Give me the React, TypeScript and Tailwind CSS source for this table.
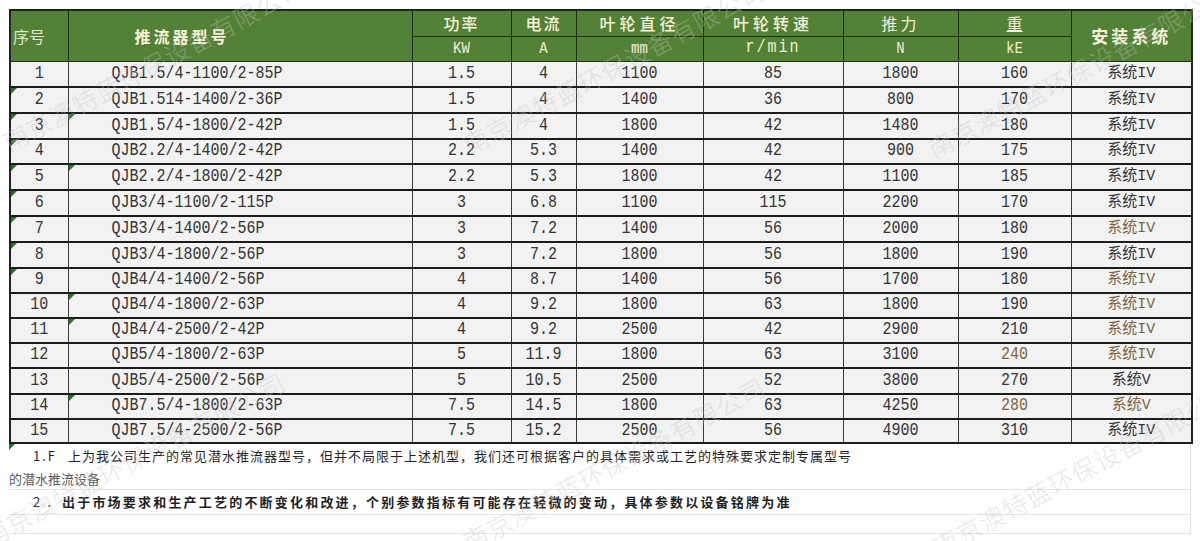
import React from 'react';

type Row = {
  no: number;
  model: string;
  kw: string;
  amp: string;
  dia: string;
  rpm: string;
  thrust: string;
  weight: string;
  sys: string;
  noMark?: boolean;
  modelMark?: boolean;
  sysBrown?: boolean;
  weightBrown?: boolean;
  h: string;
};

const rows: Row[] = [
  { no: 1, model: 'QJB1.5/4-1100/2-85P', kw: '1.5', amp: '4', dia: '1100', rpm: '85', thrust: '1800', weight: '160', sys: '系统IV', h: 'h-[26px]' },
  { no: 2, model: 'QJB1.514-1400/2-36P', kw: '1.5', amp: '4', dia: '1400', rpm: '36', thrust: '800', weight: '170', sys: '系统IV', noMark: true, h: 'h-[26px]' },
  { no: 3, model: 'QJB1.5/4-1800/2-42P', kw: '1.5', amp: '4', dia: '1800', rpm: '42', thrust: '1480', weight: '180', sys: '系统IV', noMark: true, modelMark: true, h: 'h-[26px]' },
  { no: 4, model: 'QJB2.2/4-1400/2-42P', kw: '2.2', amp: '5.3', dia: '1400', rpm: '42', thrust: '900', weight: '175', sys: '系统IV', noMark: true, h: 'h-[25px]' },
  { no: 5, model: 'QJB2.2/4-1800/2-42P', kw: '2.2', amp: '5.3', dia: '1800', rpm: '42', thrust: '1100', weight: '185', sys: '系统IV', noMark: true, modelMark: true, h: 'h-[26px]' },
  { no: 6, model: 'QJB3/4-1100/2-115P', kw: '3', amp: '6.8', dia: '1100', rpm: '115', thrust: '2200', weight: '170', sys: '系统IV', noMark: true, h: 'h-[26px]' },
  { no: 7, model: 'QJB3/4-1400/2-56P', kw: '3', amp: '7.2', dia: '1400', rpm: '56', thrust: '2000', weight: '180', sys: '系统IV', noMark: true, sysBrown: true, h: 'h-[26px]' },
  { no: 8, model: 'QJB3/4-1800/2-56P', kw: '3', amp: '7.2', dia: '1800', rpm: '56', thrust: '1800', weight: '190', sys: '系统IV', noMark: true, h: 'h-[26px]' },
  { no: 9, model: 'QJB4/4-1400/2-56P', kw: '4', amp: '8.7', dia: '1400', rpm: '56', thrust: '1700', weight: '180', sys: '系统IV', noMark: true, sysBrown: true, h: 'h-[25px]' },
  { no: 10, model: 'QJB4/4-1800/2-63P', kw: '4', amp: '9.2', dia: '1800', rpm: '63', thrust: '1800', weight: '190', sys: '系统IV', modelMark: true, sysBrown: true, h: 'h-[25px]' },
  { no: 11, model: 'QJB4/4-2500/2-42P', kw: '4', amp: '9.2', dia: '2500', rpm: '42', thrust: '2900', weight: '210', sys: '系统IV', modelMark: true, sysBrown: true, h: 'h-[25px]' },
  { no: 12, model: 'QJB5/4-1800/2-63P', kw: '5', amp: '11.9', dia: '1800', rpm: '63', thrust: '3100', weight: '240', sys: '系统IV', sysBrown: true, weightBrown: true, h: 'h-[25px]' },
  { no: 13, model: 'QJB5/4-2500/2-56P', kw: '5', amp: '10.5', dia: '2500', rpm: '52', thrust: '3800', weight: '270', sys: '系统V', h: 'h-[26px]' },
  { no: 14, model: 'QJB7.5/4-1800/2-63P', kw: '7.5', amp: '14.5', dia: '1800', rpm: '63', thrust: '4250', weight: '280', sys: '系统V', modelMark: true, sysBrown: true, weightBrown: true, h: 'h-[24px]' },
  { no: 15, model: 'QJB7.5/4-2500/2-56P', kw: '7.5', amp: '15.2', dia: '2500', rpm: '56', thrust: '4900', weight: '310', sys: '系统IV', h: 'h-[24px]' },
];

const WATERMARK = '南京澳特蓝环保设备有限公司';

// top-left green flag Excel puts on "number stored as text" cells
function Flag() {
  return <span className="absolute left-0 top-0 h-0 w-0 border-r-[6px] border-t-[6px] border-r-transparent border-t-[#1f7a1f]" />;
}

function Watermark({ pos }: { pos: string }) {
  return (
    <span
      className={`pointer-events-none absolute whitespace-nowrap text-[25px] font-light tracking-[1px] text-[#c4c4c4] opacity-40 -rotate-[28deg] ${pos}`}
      style={{ fontFamily: '"Noto Sans CJK SC", sans-serif' }}
    >
      {WATERMARK}
    </span>
  );
}

// SimSun-like tall glyphs
function Tall({ children }: { children: React.ReactNode }) {
  return <span className="inline-block scale-y-[1.22]">{children}</span>;
}

export default function App() {
  const mono = { fontFamily: '"Liberation Mono", "Noto Sans CJK SC", monospace' };
  const cjk = { fontFamily: '"Noto Sans CJK SC", sans-serif' };
  const td = 'border-x border-[#3a3a3a] text-center p-0';

  return (
    <div className="relative h-[541px] w-[1200px] overflow-hidden bg-white pt-[9px]">
      <table className="ml-[9px] w-[1182px] table-fixed border-collapse border-l-2 border-r-2 border-[#222]" style={mono}>
        <colgroup>
          <col className="w-[58px]" />
          <col className="w-[344px]" />
          <col className="w-[99px]" />
          <col className="w-[65px]" />
          <col className="w-[127px]" />
          <col className="w-[140px]" />
          <col className="w-[115px]" />
          <col className="w-[113px]" />
          <col className="w-[121px]" />
        </colgroup>
        <thead className="bg-[#538135] text-[#f6f1dc]">
          <tr className="h-[26px] border-t-2 border-[#222]">
            <th rowSpan={2} className="border border-[#1e2e12] pl-[2px] text-left text-[16px] font-normal text-[#dfe9c8]" style={cjk}>
              序号
            </th>
            <th rowSpan={2} className="border border-[#1e2e12] pl-[66px] text-left text-[16px] font-bold tracking-[3px]" style={cjk}>
              推流器型号
            </th>
            <th className="border border-[#1e2e12] text-[16px] font-medium tracking-[2px]" style={cjk}>功率</th>
            <th className="border border-[#1e2e12] text-[16px] font-medium tracking-[2px]" style={cjk}>电流</th>
            <th className="border border-[#1e2e12] text-[16px] font-medium tracking-[4px]" style={cjk}>叶轮直径</th>
            <th className="border border-[#1e2e12] text-[16px] font-medium tracking-[4px]" style={cjk}>叶轮转速</th>
            <th className="border border-[#1e2e12] text-[16px] font-normal tracking-[3px]" style={cjk}>推力</th>
            <th className="border border-[#1e2e12] text-[16px] font-normal underline decoration-[#f6f1dc]" style={cjk}>重</th>
            <th rowSpan={2} className="border border-[#1e2e12] text-[17px] font-bold tracking-[3px]" style={cjk}>
              安装系统
            </th>
          </tr>
          <tr className="h-[25px]">
            <th className="border border-[#1e2e12] text-[14px] font-normal"><Tall>KW</Tall></th>
            <th className="border border-[#1e2e12] text-[14px] font-normal"><Tall>A</Tall></th>
            <th className="border border-[#1e2e12] text-[14px] font-normal"><Tall>mm</Tall></th>
            <th className="border border-[#1e2e12] text-[15px] font-normal tracking-[2px]"><Tall>r/min</Tall></th>
            <th className="border border-[#1e2e12] text-[14px] font-normal"><Tall>N</Tall></th>
            <th className="border border-[#1e2e12] text-[14px] font-normal"><Tall>kE</Tall></th>
          </tr>
        </thead>
        <tbody className="bg-[#f2f2f2] text-[15px] text-[#333]">
          {rows.map((r) => (
            <tr key={r.no} className={`${r.h} border-b-2 border-[#1c1c1c]`}>
              <td className={`relative ${td}`}>
                {r.noMark && <Flag />}
                <Tall>{r.no}</Tall>
              </td>
              <td className={`relative ${td} pl-[43px] text-left`}>
                {r.modelMark && <Flag />}
                <Tall>{r.model}</Tall>
              </td>
              <td className={td}><Tall>{r.kw}</Tall></td>
              <td className={td}><Tall>{r.amp}</Tall></td>
              <td className={td}><Tall>{r.dia}</Tall></td>
              <td className={td}><Tall>{r.rpm}</Tall></td>
              <td className={td}><Tall>{r.thrust}</Tall></td>
              <td className={`${td} ${r.weightBrown ? 'text-[#7d6440]' : ''}`}><Tall>{r.weight}</Tall></td>
              <td className={`${td} ${r.sysBrown ? 'text-[#7d6440]' : ''}`}>{r.sys}</td>
            </tr>
          ))}
        </tbody>
      </table>

      {/* notes under the table */}
      <div className="relative ml-[9px] w-[1182px] border-r border-[#e2e2e2] text-[#1f1f1f]" style={cjk}>
        <Flag />
        <div className="h-[46px] border-b border-[#e4e4e4]">
          <p className="flex h-[24px] items-center pl-[24px] text-[13px] tracking-[1px]">
            <span className="w-[35px] tracking-[2px]">1.F</span>
            <span>上为我公司生产的常见潜水推流器型号，但并不局限于上述机型，我们还可根据客户的具体需求或工艺的特殊要求定制专属型号</span>
          </p>
          <p className="flex h-[22px] items-center text-[13px] text-[#5a5a5a]">的潜水推流设备</p>
        </div>
        <p className="flex h-[25px] items-center border-b border-[#e4e4e4] pl-[24px] text-[13px] font-bold tracking-[2.2px]">
          <span className="w-[29px] font-normal">2 .</span>
          <span>出于市场要求和生产工艺的不断变化和改进，个别参数指标有可能存在轻微的变动，具体参数以设备铭牌为准</span>
        </p>
        <div className="h-[19px] border-b border-[#e4e4e4]" />
      </div>

      <Watermark pos="left-[-15px] top-[45px]" />
      <Watermark pos="left-[445px] top-[48px]" />
      <Watermark pos="left-[910px] top-[52px]" />
      <Watermark pos="left-[-35px] top-[440px]" />
      <Watermark pos="left-[445px] top-[445px]" />
      <Watermark pos="left-[915px] top-[450px]" />
    </div>
  );
}
